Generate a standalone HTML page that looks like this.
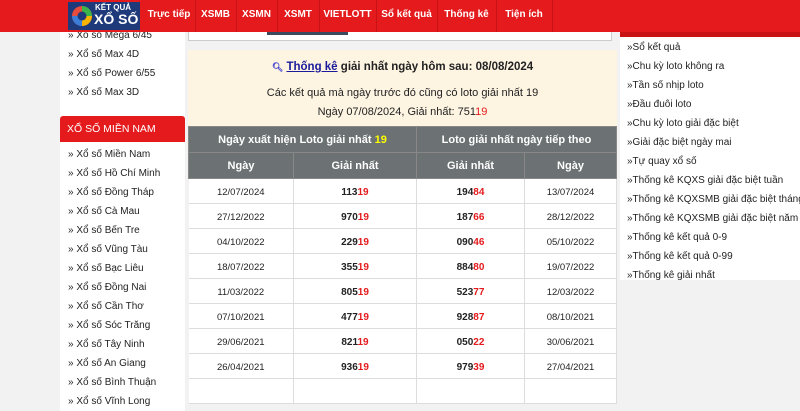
<!DOCTYPE html>
<html><head><meta charset="utf-8"><style>
*{box-sizing:border-box;margin:0;padding:0}
body{width:800px;height:411px;overflow:hidden;background:#f2f2f2;font-family:"Liberation Sans",Arial,sans-serif;position:relative;color:#222}
.nav{position:absolute;left:0;top:0;width:800px;height:32px;background:#e41a1c;z-index:5}
.logo{position:absolute;left:68px;top:2px;width:72px;height:28px;background:#1f3a7a}
.nav a{position:absolute;top:0;height:32px;line-height:30px;color:#fff;font-weight:bold;font-size:10px;text-decoration:none;text-align:center;white-space:nowrap}
.sep{position:absolute;top:0;width:1px;height:32px;background:#c81214}
.left{position:absolute;left:60px;top:32px;width:125px;height:379px;background:#fff}
.left div{font-size:10px;height:19px;line-height:19px;padding-left:8px;color:#222;white-space:nowrap}
.redh{position:absolute;left:60px;top:116px;width:125px;height:26px;background:#e41a1c;border-radius:3px 3px 0 0;color:#fff;font-size:10.5px;line-height:26px;padding-left:7px}
.tbox{position:absolute;left:188px;top:32px;width:424px;height:9px;border:1px solid #ccc;border-top:0;background:#fff}
.tab{position:absolute;left:267px;top:32px;width:81px;height:3px;background:#3b4a5f}
.yel{position:absolute;left:188px;top:50px;width:429px;height:76px;background:#fdf4e2;text-align:center;font-size:11px}
.yel div{position:absolute;left:0;width:429px;line-height:14px}
table{position:absolute;left:188px;top:126px;width:429px;border-collapse:collapse;font-size:9.5px}
th{background:#6c7273;color:#fff;font-size:11px;height:26px;border:1px solid #888;font-weight:bold}
td{height:25px;text-align:center;border-bottom:1px solid #ddd;border-right:1px solid #ddd;background:#fff;padding-top:3px}
td b{font-size:10px}
.r{color:#e41a1c}
.right{position:absolute;left:620px;top:37px;width:180px;height:243px;background:#fff}
.rband{position:absolute;left:620px;top:32px;width:180px;height:5px;background:#c81214}
.right div{font-size:10px;height:19px;line-height:19px;padding-left:7px;white-space:nowrap}
</style></head><body>
<div class="nav">
<div class="logo"><svg width="28" height="28" viewBox="0 0 28 28" style="position:absolute;left:0;top:0"><circle cx="14" cy="14" r="10" fill="#e74c3c"/><path d="M14 4a10 10 0 0 1 10 10h-10z" fill="#3ab54a"/><path d="M24 14a10 10 0 0 1-10 10v-10z" fill="#f4b400"/><path d="M14 24a10 10 0 0 1-10-10h10z" fill="#3b7dd8"/><circle cx="14" cy="14" r="4.5" fill="#1f3a7a"/></svg><span style="position:absolute;left:27px;top:1px;color:#fff;font-size:8px;font-weight:bold">KẾT QUẢ</span><span style="position:absolute;left:26px;top:9px;color:#fff;font-size:14px;font-weight:bold">XỔ SỐ</span></div>
<a style="left:143px;width:52px">Trực tiếp</a><div class="sep" style="left:195px"></div>
<a style="left:195px;width:41px">XSMB</a><div class="sep" style="left:236px"></div>
<a style="left:236px;width:41px">XSMN</a><div class="sep" style="left:277px"></div>
<a style="left:277px;width:42px">XSMT</a><div class="sep" style="left:319px"></div>
<a style="left:319px;width:57px">VIETLOTT</a><div class="sep" style="left:376px"></div>
<a style="left:376px;width:61px">Sổ kết quả</a><div class="sep" style="left:437px"></div>
<a style="left:437px;width:59px">Thống kê</a><div class="sep" style="left:496px"></div>
<a style="left:496px;width:56px">Tiện ích</a><div class="sep" style="left:552px"></div>
</div>
<div class="left">
<div style="margin-top:-6px">» Xổ số Mega 6/45</div><div>» Xổ số Max 4D</div><div>» Xổ số Power 6/55</div><div>» Xổ số Max 3D</div>
<div style="margin-top:43px">» Xổ số Miền Nam</div><div>» Xổ số Hồ Chí Minh</div><div>» Xổ số Đồng Tháp</div><div>» Xổ số Cà Mau</div><div>» Xổ số Bến Tre</div><div>» Xổ số Vũng Tàu</div><div>» Xổ số Bạc Liêu</div><div>» Xổ số Đồng Nai</div><div>» Xổ số Cần Thơ</div><div>» Xổ số Sóc Trăng</div><div>» Xổ số Tây Ninh</div><div>» Xổ số An Giang</div><div>» Xổ số Bình Thuận</div><div>» Xổ số Vĩnh Long</div>
</div>
<div class="redh">XỔ SỐ MIỀN NAM</div>
<div class="tbox"></div><div class="tab"></div>
<div class="yel">
<div style="top:10px;font-weight:bold;font-size:11.5px"><span style="color:#33c;font-size:9px">🔍︎</span> <u style="color:#1a1a9a">Thống kê</u> giải nhất ngày hôm sau: 08/08/2024</div>
<div style="top:36px">Các kết quả mà ngày trước đó cũng có loto giải nhất 19</div>
<div style="top:55px">Ngày 07/08/2024, Giải nhất: 751<span class="r">19</span></div>
</div>
<table>
<tr><th colspan="2" style="width:228px">Ngày xuất hiện Loto giải nhất <span style="color:#ff0">19</span></th><th colspan="2">Loto giải nhất ngày tiếp theo</th></tr>
<tr><th style="width:105px">Ngày</th><th style="width:123px">Giải nhất</th><th style="width:108px">Giải nhất</th><th>Ngày</th></tr>
<tr><td>12/07/2024</td><td><b>113<span class="r">19</span></b></td><td><b>194<span class="r">84</span></b></td><td>13/07/2024</td></tr>
<tr><td>27/12/2022</td><td><b>970<span class="r">19</span></b></td><td><b>187<span class="r">66</span></b></td><td>28/12/2022</td></tr>
<tr><td>04/10/2022</td><td><b>229<span class="r">19</span></b></td><td><b>090<span class="r">46</span></b></td><td>05/10/2022</td></tr>
<tr><td>18/07/2022</td><td><b>355<span class="r">19</span></b></td><td><b>884<span class="r">80</span></b></td><td>19/07/2022</td></tr>
<tr><td>11/03/2022</td><td><b>805<span class="r">19</span></b></td><td><b>523<span class="r">77</span></b></td><td>12/03/2022</td></tr>
<tr><td>07/10/2021</td><td><b>477<span class="r">19</span></b></td><td><b>928<span class="r">87</span></b></td><td>08/10/2021</td></tr>
<tr><td>29/06/2021</td><td><b>821<span class="r">19</span></b></td><td><b>050<span class="r">22</span></b></td><td>30/06/2021</td></tr>
<tr><td>26/04/2021</td><td><b>936<span class="r">19</span></b></td><td><b>979<span class="r">39</span></b></td><td>27/04/2021</td></tr>
<tr><td>&nbsp;</td><td></td><td></td><td></td></tr>
</table>
<div class="rband"></div>
<div class="right">
<div style="margin-top:1px">»Sổ kết quả</div><div>»Chu kỳ loto không ra</div><div>»Tần số nhịp loto</div><div>»Đầu đuôi loto</div><div>»Chu kỳ loto giải đặc biệt</div><div>»Giải đặc biệt ngày mai</div><div>»Tự quay xổ số</div><div>»Thống kê KQXS giải đặc biệt tuần</div><div>»Thống kê KQXSMB giải đặc biệt tháng</div><div>»Thống kê KQXSMB giải đặc biệt năm</div><div>»Thống kê kết quả 0-9</div><div>»Thống kê kết quả 0-99</div><div>»Thống kê giải nhất</div>
</div>
</body></html>
